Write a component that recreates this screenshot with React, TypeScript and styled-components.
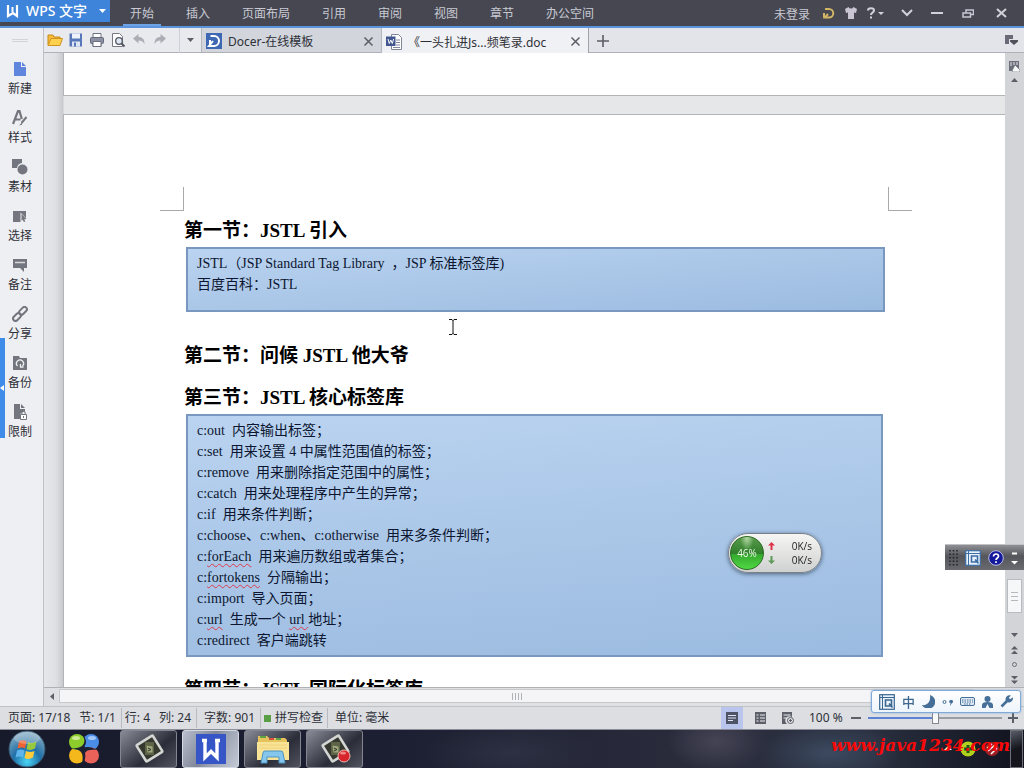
import React from "react";
import styled, { createGlobalStyle, css } from "styled-components";

const GlobalStyle = createGlobalStyle`
  * { box-sizing: border-box; }
  body {
    margin: 0;
    font-family: "Noto Sans", "Noto Sans CJK SC", sans-serif;
    font-size: 12px;
    line-height: 16px;
    color: #2e3038;
  }
  button {
    font: inherit;
    color: inherit;
    background: none;
    border: 0;
    padding: 0;
    margin: 0;
  }
  svg { display: block; flex: none; }
`;

/* ---------- frame ---------- */

const Shell = styled.div`
  display: flex;
  flex-direction: column;
  height: 100vh;
  overflow: hidden;
  background: #e5e6e9;
`;

const TitleBar = styled.header`
  display: flex;
  flex: none;
  height: 28px;
  background: #464751;
  border-bottom: 2px solid #5b93dc;
  color: #c9cad3;
`;

const AppButton = styled.button`
  display: flex;
  align-items: center;
  width: 110px;
  height: 22px;
  padding: 0 4px 0 6px;
  background: #3d84da;
  color: #fff;
  font-size: 14px;
  font-weight: 500;
  svg:last-child { margin-left: auto; }
`;

const Menu = styled.nav`
  display: flex;
  gap: 18px;
  padding-left: 13px;
`;

const MenuItem = styled.button<{ $active?: boolean }>`
  height: 26px;
  padding: 4px 7px 0;
  border-bottom: 2px solid ${(p) => (p.$active ? "#6ea3e6" : "transparent")};
`;

const WindowTools = styled.div`
  display: flex;
  align-items: center;
  margin-left: auto;
  padding-right: 10px;
`;

const LoginButton = styled.button`
  margin-right: 8px;
  padding-top: 3px;
`;

const ToolButton = styled.button<{ $w: number }>`
  display: flex;
  align-items: center;
  justify-content: center;
  width: ${(p) => p.$w}px;
  height: 26px;
`;

const Body = styled.div`
  display: flex;
  flex: 1;
  min-height: 0;
`;

/* ---------- sidebar ---------- */

const Sidebar = styled.aside`
  position: relative;
  display: flex;
  flex-direction: column;
  flex: none;
  width: 44px;
  padding: 11px 3px 0 0;
  background: #eeeff2;
  border-right: 1px solid #bfc1c6;
`;

const Grip = styled.div`
  flex: none;
  width: 16px;
  height: 3px;
  margin: 0 0 19px 12px;
  border: solid #d2d4d9;
  border-width: 1px 0;
`;

const SideItem = styled.button`
  display: flex;
  flex: none;
  flex-direction: column;
  align-items: center;
  gap: 4px;
  height: 49px;
`;

const Drawer = styled.button`
  position: absolute;
  left: 0;
  top: 310px;
  display: flex;
  align-items: center;
  width: 5px;
  height: 100px;
  background: #3f8bea;
`;

/* ---------- document tabs ---------- */

const Main = styled.div`
  display: flex;
  flex: 1;
  flex-direction: column;
  min-width: 0;
`;

const TabRow = styled.div`
  display: flex;
  flex: none;
  height: 25px;
  background: #e2e4e9;
  border-bottom: 1px solid #aeb1b8;
`;

const QuickTools = styled.div`
  display: flex;
  align-items: center;
  width: 157px;
  padding-left: 1px;
  background: #e8eaed;
`;

const Divider = styled.span`
  width: 1px;
  height: 25px;
  margin-left: 9px;
  background: #cdd0d6;
`;

const Tab = styled.div<{ $active?: boolean }>`
  display: flex;
  align-items: center;
  gap: 6px;
  width: ${(p) => (p.$active ? 208 : 180)}px;
  height: ${(p) => (p.$active ? 25 : 24)}px;
  padding: 2px 7px 0 4px;
  background: ${(p) => (p.$active ? "#f0f1f4" : "#d2d5dc")};
  border-left: 1px solid #b4b7be;
  ${(p) => p.$active && css`border-right: 1px solid #9fa2a9;`}
  button { margin-left: auto; }
`;

const TabTitle = styled.span`
  padding-top: 2px;
`;

const NewTab = styled.button`
  padding: 2px 8px 0;
`;

const TabList = styled.button`
  margin-left: auto;
  padding-right: 6px;
`;

/* ---------- document ---------- */

const Workspace = styled.div`
  display: flex;
  flex: 1;
  min-height: 0;
`;

const Canvas = styled.main`
  flex: 1;
  min-width: 0;
  padding-left: 19px;
  overflow: hidden;
  background: linear-gradient(90deg, #e6e7ea 0, #dfe0e3 12px, #c9cacd 19px, #e6e7e9 20px);
`;

const Page = styled.article`
  position: relative;
  padding: 0 117px 0 120px;
  background: #fff;
  border: solid #b3b4b7;
  border-width: 1px 0 1px 1px;
`;

const PageEnd = styled(Page)`
  height: 43px;
  border-top: 0;
  margin-bottom: 18px;
`;

const PageMargins = styled.div`
  display: flex;
  justify-content: space-between;
  margin: 0 -24px 4px;
  padding-top: 72px;
`;

const Corner = styled.span<{ $side: "left" | "right" }>`
  width: 24px;
  height: 24px;
  border-bottom: 1px solid #a9a9a9;
  ${(p) => (p.$side === "left" ? "border-right" : "border-left")}: 1px solid #a9a9a9;
`;

const Heading = styled.h2<{ $gap?: number }>`
  margin: ${(p) => p.$gap ?? 0}px 0 0;
  font-family: "Liberation Serif", "Noto Sans CJK SC", serif;
  font-size: 19px;
  font-weight: 700;
  line-height: 32px;
  color: #000;
  white-space: nowrap;
`;

const CodeBox = styled.section<{ $h: number; $inset: number }>`
  min-height: ${(p) => p.$h}px;
  margin: 0 ${(p) => p.$inset}px 0 2px;
  padding: 4px 9px 0;
  border: 2px solid #7898bf;
  background: linear-gradient(175deg, #bad3f0, #9bbbe0);
  color: #0c1630;
  font-family: "Liberation Serif", "Noto Sans CJK SC", serif;
  font-size: 14px;
  line-height: 21px;
  p { margin: 0; white-space: pre; }
`;

const Misspelt = styled.span`
  text-decoration: underline wavy #dc3a4c 1px;
  text-underline-offset: 2px;
  text-decoration-skip-ink: none;
`;

const Caret = styled.svg`
  position: absolute;
  left: 385px;
  top: 204px;
`;

/* ---------- scroll bars ---------- */

const VScroll = styled.div`
  display: flex;
  flex: none;
  flex-direction: column;
  align-items: center;
  gap: 0;
  width: 19px;
  padding-top: 8px;
  background: #d3d4d7;
`;

const VTrack = styled.div`
  display: flex;
  flex: 1;
  flex-direction: column;
  justify-content: flex-end;
  padding-bottom: 14px;
`;

const VThumb = styled.div`
  display: flex;
  flex-direction: column;
  align-items: center;
  justify-content: center;
  gap: 3px;
  width: 15px;
  height: 34px;
  background: #f6f7f9;
  border: 1px solid #b9bbc1;
  i { width: 7px; height: 1px; background: #b6b8bd; }
`;

const ScrollButton = styled.button`
  display: flex;
  align-items: center;
  justify-content: center;
  width: 15px;
  height: 15px;
`;

const HScroll = styled.div`
  display: flex;
  flex: none;
  align-items: center;
  height: 19px;
  padding: 1px 50px 3px 0;
  background: #dfe0e3;
  border-top: 1px solid #b0b1b5;
`;

const HThumb = styled.div`
  display: flex;
  flex: 1;
  align-items: center;
  justify-content: center;
  gap: 2px;
  height: 14px;
  background: #f5f5f7;
  border: 1px solid #c8c9cd;
  i { width: 1px; height: 7px; background: #b0b2b8; }
`;

/* ---------- status bar ---------- */

const StatusBar = styled.footer`
  display: flex;
  flex: none;
  align-items: center;
  height: 23px;
  padding-left: 1px;
  background: #dcdee2;
  border-top: 1px solid #c0c2c6;
`;

const StatusCell = styled.div`
  display: flex;
  align-items: center;
  gap: 9px;
  height: 20px;
  padding: 0 5px 0 7px;
  & + & { border-left: 1px solid #b9bbc0; }
`;

const TightCell = styled(StatusCell)`
  gap: 4px;
  padding: 0 4px 0 3px;
`;

const PositionCell = styled(StatusCell)`
  padding-left: 3px;
`;

const Square = styled.span`
  width: 7px;
  height: 7px;
  background: #5a9e45;
`;

const StatusRight = styled.div`
  display: flex;
  align-items: center;
  margin-left: auto;
  padding-right: 6px;
`;

const ViewButton = styled.button<{ $on?: boolean }>`
  display: flex;
  align-items: center;
  justify-content: center;
  width: 22px;
  height: 22px;
  margin-right: 6px;
  background: ${(p) => (p.$on ? "#b9c5ec" : "transparent")};
`;

const ZoomLabel = styled.span`
  width: 42px;
  margin-left: 4px;
`;

const Zoom = styled.input`
  appearance: none;
  width: 134px;
  height: 14px;
  margin: 0 6px 0 7px;
  background: linear-gradient(90deg, #5c83d6 50%, #9a9da4 50%) center / 100% 2px no-repeat;
  &::-webkit-slider-thumb {
    appearance: none;
    width: 7px;
    height: 12px;
    background: #fafafa;
    border: 1px solid #85878e;
  }
`;

/* ---------- task bar ---------- */

const TaskBar = styled.nav`
  position: relative;
  display: flex;
  flex: none;
  align-items: center;
  gap: 5px;
  height: 39px;
  border-top: 1px solid #8b8e98;
  background:
    radial-gradient(ellipse 70px 30px at 81% 60%, #3c4a60, transparent),
    radial-gradient(ellipse 50px 30px at 70% 30%, #454455, transparent),
    radial-gradient(ellipse 90px 30px at 50% 60%, #2c3042, transparent),
    linear-gradient(90deg, #171a2b, #1d2032 40%, #2a2c3c 68%, #2a3040 85%, #11131e);
`;

const StartButton = styled.button`
  margin-left: 8px;
`;

const Launcher = styled.button`
  margin: 0 15px 0 17px;
`;

const TaskButton = styled.button<{ $on?: boolean }>`
  display: flex;
  align-items: center;
  justify-content: center;
  width: 57px;
  height: 38px;
  border: 1px solid ${(p) => (p.$on ? "#d5d9e4" : "#83868f")};
  border-radius: 3px;
  background: ${(p) =>
    p.$on
      ? "linear-gradient(120deg, #b9bfce, #7f8697 45%, #9aa1b1 60%, #c4c9d5)"
      : "linear-gradient(140deg, #898c96, #4a4d58 40%, #2b2d38 60%, #50535d)"};
`;

const Tray = styled.div`
  display: flex;
  align-items: center;
  gap: 7px;
  height: 100%;
  margin-left: auto;
  padding-right: 1px;
`;

const ShowDesktop = styled.button`
  width: 13px;
  height: 38px;
  margin-left: 3px;
  border: 1px solid #6d7078;
  background: linear-gradient(160deg, #5a5d66, #14151d 50%);
`;

const SiteLink = styled.a`
  position: absolute;
  right: 14px;
  top: 5px;
  color: #fb0808;
  font: italic 700 17px/20px "DejaVu Serif", serif;
  text-decoration: none;
`;

/* ---------- floating widgets ---------- */

const SpeedBall = styled.aside`
  position: fixed;
  right: 202px;
  bottom: 195px;
  display: flex;
  align-items: center;
  width: 94px;
  height: 40px;
  padding: 0 9px 0 1px;
  border: 1px solid #7b8087;
  border-radius: 20px;
  background: linear-gradient(#f6f6f4, #cfd1d0);
  box-shadow: 0 1px 4px #4b5f7a;
  color: #222;
  font-family: "Open Sans", sans-serif;
  font-size: 10px;
  line-height: 14px;
`;

const Percent = styled.strong`
  display: flex;
  align-items: center;
  justify-content: center;
  width: 34px;
  height: 34px;
  margin-right: 4px;
  border: 1px solid #2b6b22;
  border-radius: 50%;
  background: radial-gradient(ellipse at 50% 0, #b8dba9 0, transparent 30%), linear-gradient(#5a9a4c, #2f7f2b 52%, #35a82f 54%, #4fd843);
  color: #eefbe8;
  font-weight: 400;
`;

const Rates = styled.div`
  flex: 1;
  p {
    display: flex;
    align-items: center;
    justify-content: space-between;
    margin: 0;
  }
`;

const LanguageBar = styled.aside`
  position: fixed;
  right: 0;
  bottom: 198px;
  display: flex;
  align-items: center;
  gap: 7px;
  width: 79px;
  height: 26px;
  padding: 0 3px 0 4px;
  border-top: 1px solid #c2c2c4;
  background: linear-gradient(#8f9095, #55565c 45%, #6a6b70);
`;

const ImeBar = styled.aside`
  position: fixed;
  right: 3px;
  bottom: 55px;
  display: flex;
  align-items: center;
  justify-content: space-between;
  width: 150px;
  height: 23px;
  padding: 0 7px;
  border: 1px solid #7fa9d6;
  border-radius: 3px;
  background: linear-gradient(#fff, #edf4fb);
  box-shadow: 0 0 2px #7fa9d6;
  color: #3f678f;
  font-weight: 500;
  font-size: 13px;
`;

/* ---------- icons ---------- */

type IconProps = { w?: number; h?: number; children: React.ReactNode };
const Icon = ({ w = 16, h = 16, children }: IconProps) => (
  <svg width={w} height={h} viewBox={`0 0 ${w} ${h}`} aria-hidden="true">
    {children}
  </svg>
);

const Down = ({ fill = "#5c5f68" }) => (
  <Icon w={7} h={4}><path d="M0 0h7L3.500 4z" fill={fill} /></Icon>
);
const Up = () => (
  <Icon w={7} h={4}><path d="M0 4h7L3.500 0z" fill="#5c5f68" /></Icon>
);
const Close = ({ color = "#5b5d66" }) => (
  <Icon w={11} h={11}><path d="M1.500 1.500l8 8m0-8l-8 8" stroke={color} strokeWidth="1.500" /></Icon>
);
const Quick = ({ color }: { color: string }) => (
  <Icon>
    <rect x=".7" y=".7" width="14.600" height="14.600" fill="#eaf3fb" stroke={color} strokeWidth="1.200" />
    <path d="M3.500 1v14M1 3.500h14" stroke={color} />
    <path d="M6.500 6h6v6h-6zM10 9.500l3.500 4" fill="none" stroke={color} strokeWidth="1.600" />
  </Icon>
);

const g = "#73767e";
const sideItems: [string, React.ReactNode][] = [
  ["新建", <path d="M2 1h7v5h5v9H2zM10 1l4 4h-4z" fill="#5f86dc" />],
  ["样式", <>
    <path d="M1 14L6 1h1.500l2.300 8M3.500 9.500h5" fill="none" stroke={g} strokeWidth="2.200" />
    <path d="M14.500 7l-5 6" stroke={g} strokeWidth="2" /><path d="M10 12.500l-3 3 3-.7z" fill={g} />
  </>],
  ["素材", <><path d="M0 0h10v4a6 6 0 0 0-5 5H0z" fill={g} /><circle cx="10.500" cy="10.500" r="5" fill={g} /></>],
  ["选择", <><path d="M1 3h13v7L8.500 4.500V14H1z" fill={g} /><path d="M9.500 6l5 5-2.200.2 1 2.300-1.500.5-1-2.300-1.300 1z" fill={g} /></>],
  ["备注", <><path d="M1 2h14v9h-3v4l-4-4H1z" fill={g} /><path d="M3 5.500h10" stroke="#d8dade" strokeWidth="1.500" /></>],
  ["分享", <g fill="none" stroke={g} strokeWidth="2">
    <rect x="-4.500" y="-2.400" width="9" height="4.800" rx="2.400" transform="translate(11 4.800) rotate(-45)" />
    <rect x="-4.500" y="-2.400" width="9" height="4.800" rx="2.400" transform="translate(5 11) rotate(-45)" />
  </g>],
  ["备份", <>
    <path d="M1 1h6l1 2h7v12H1z" fill={g} />
    <path d="M5.500 11a3.500 3.500 0 1 1 5 0M8.500 9v3h3" fill="none" stroke="#eef0f2" strokeWidth="1.300" />
  </>],
  ["限制", <>
    <path d="M2 0h6v5h5v3a4 4 0 0 0-5 3v4H2zM9 0l4 4H9z" fill={g} />
    <path d="M8.500 10.500h6v5h-6z" fill="#fff" stroke={g} />
    <path d="M9.800 10.500V9a1.700 1.700 0 0 1 3.400 0v1.500" fill="none" stroke={g} />
    <path d="M11.500 12v2" stroke={g} />
  </>],
];

const quick: [string, React.ReactNode][] = [
  ["打开", <><path d="M1 13V3h5l1 2h6v3" fill="#f5bd3a" stroke="#c98a1c" /><path d="M1 13.500l3-7h11.500l-2.500 7z" fill="#fdd04d" stroke="#d1921f" /></>],
  ["保存", <><path d="M1.500 1.500h12.500v13H1.500z" fill="#5877b8" /><path d="M4 1.500h8v5H4z" fill="#eef2fa" /><path d="M4 9.500h8v5H4z" fill="#dfe6f4" /><path d="M6 10.500h2v4H6z" fill="#5877b8" /></>],
  ["打印", <><path d="M4 5V1.500h8V5M4 11v3.500h8V11" fill="#fff" stroke="#6c7080" /><rect x="1.500" y="5.500" width="13" height="6" rx="1" fill="#8b90a2" stroke="#656a7a" /><path d="M4 9.500h8v5H4z" fill="#fff" stroke="#6c7080" /></>],
  ["打印预览", <><path d="M2.500 1.500h7l3 3v10h-10z" fill="#fff" stroke="#777a82" /><circle cx="9" cy="9" r="3.300" fill="#dde8f2" stroke="#555863" strokeWidth="1.300" /><path d="M11.300 11.300l3.200 3.200" stroke="#555863" strokeWidth="2" /></>],
  ["撤销", <path d="M2 6.500L7.500 2v3c4 0 6 2.500 6 7-1.500-2.500-3-3.500-6-3.500v3z" fill="#aaadb4" />],
  ["恢复", <path d="M14 6.500L8.500 2v3c-4 0-6 2.500-6 7 1.500-2.500 3-3.500 6-3.500v3z" fill="#aaadb4" />],
];

const CamtasiaIcon = ({ recording = false }) => (
  <Icon w={32} h={30}>
    <rect x="7" y="5" width="19" height="19" rx="1" fill="#35382f" stroke="#d4d6d3" strokeWidth="2.600" transform="rotate(-32 16.500 14.500)" />
    <path d="M12 8h9v13h-9z" fill="#5c6347" />
    <path d="M13.500 11.500l6 1v6h-5z" fill="#a0a77f" />
    <path d="M15 14l3 1.500-3 1.500" fill="none" stroke="#2d3025" />
    {recording && <><circle cx="25" cy="22" r="6" fill="#d6262b" stroke="#f0b5b0" /><ellipse cx="24" cy="19" rx="3" ry="1.600" fill="#ee8682" /></>}
  </Icon>
);

const menu = ["开始", "插入", "页面布局", "引用", "审阅", "视图", "章节", "办公空间"];

export default function App() {
  return (
    <Shell>
      <GlobalStyle />
      <TitleBar>
        <AppButton>
          <Icon w={20} h={14}>
            <path d="M2 1v11l5-3 4 3V1" fill="none" stroke="#fff" strokeWidth="2.200" />
            <path d="M6.500 3v5" stroke="#fff" strokeWidth="2" />
          </Icon>
          WPS 文字
          <Down fill="#fff" />
        </AppButton>
        <Menu>
          {menu.map((m, i) => <MenuItem key={m} $active={i === 0}>{m}</MenuItem>)}
        </Menu>
        <WindowTools>
          <LoginButton>未登录</LoginButton>
          <ToolButton $w={22} aria-label="Docer">
            <Icon w={12} h={12}><path d="M2 2h4a4 4 0 0 1 0 8.500H2l3-3.500M1 6v4.500" fill="none" stroke="#d2b565" strokeWidth="2" /></Icon>
          </ToolButton>
          <ToolButton $w={22} aria-label="皮肤">
            <Icon w={12} h={12}><path d="M0 2l3.500-2a2.800 2.800 0 0 0 5 0L12 2l-1 4-2-.5V12H3V5.500L1 6z" fill="#c9c5d2" /></Icon>
          </ToolButton>
          <ToolButton $w={26} aria-label="帮助">
            <Icon w={18} h={12}>
              <path d="M2 3.500C2 .5 8 .5 8 3.500 8 5.500 5 5.500 5 8M5 9.500v2" fill="none" stroke="#d3d1da" strokeWidth="2" />
              <path d="M12 5h6l-3 3z" fill="#d3d1da" />
            </Icon>
          </ToolButton>
          <ToolButton $w={38} aria-label="收起功能区">
            <Icon w={12} h={8}><path d="M1 1l5 5 5-5" fill="none" stroke="#d3d1da" strokeWidth="2" /></Icon>
          </ToolButton>
          <ToolButton $w={22} aria-label="最小化">
            <Icon w={12} h={4}><path d="M0 2h12" stroke="#d3d1da" strokeWidth="2" /></Icon>
          </ToolButton>
          <ToolButton $w={40} aria-label="还原">
            <Icon w={12} h={9}><path d="M4 3.500V1h7.500v4.500H9M1 4h7.500v4H1z" fill="none" stroke="#c9c5d2" strokeWidth="1.500" /></Icon>
          </ToolButton>
          <ToolButton $w={26} aria-label="关闭">
            <Icon w={11} h={10}><path d="M1 1l9 8M10 1L1 9" stroke="#d3d1da" strokeWidth="2" /></Icon>
          </ToolButton>
        </WindowTools>
      </TitleBar>

      <Body>
        <Sidebar>
          <Grip />
          {sideItems.map(([label, art]) => (
            <SideItem key={label}><Icon>{art}</Icon>{label}</SideItem>
          ))}
          <Drawer aria-label="展开侧栏"><Icon w={4} h={6}><path d="M4 0v6L0 3z" fill="#fff" /></Icon></Drawer>
        </Sidebar>

        <Main>
          <TabRow>
            <QuickTools>
              {quick.map(([label, art]) => (
                <ToolButton key={label} $w={21} aria-label={label}><Icon>{art}</Icon></ToolButton>
              ))}
              <Divider />
              <ToolButton $w={21} aria-label="更多"><Down /></ToolButton>
            </QuickTools>
            <Tab>
              <Icon w={16} h={16}>
                <path d="M0 0h16v16H0z" fill="#3f68b4" />
                <path d="M4.500 3H8a5 5 0 0 1 0 10H3l4-5M4 7v5" fill="none" stroke="#fff" strokeWidth="2" />
              </Icon>
              <TabTitle>Docer-在线模板</TabTitle>
              <button aria-label="关闭 Docer"><Close /></button>
            </Tab>
            <Tab $active>
              <Icon w={16} h={16}>
                <path d="M5.500.5h7l3 3v12h-10z" fill="#fff" stroke="#80869a" />
                <path d="M10 6h4M10 8.500h4M10 11h4M7 13.500h7" stroke="#80869a" />
                <path d="M0 2.500h9.500V12H0z" fill="#42578f" />
                <path d="M2 5l1.300 4.500L4.800 6l1.500 3.500L7.600 5" fill="none" stroke="#fff" />
              </Icon>
              <TabTitle>《一头扎进Js...频笔录.doc</TabTitle>
              <button aria-label="关闭文档"><Close /></button>
            </Tab>
            <NewTab aria-label="新建标签">
              <Icon w={12} h={12}><path d="M6 0v12M0 6h12" stroke="#5b5d66" strokeWidth="1.600" /></Icon>
            </NewTab>
            <TabList aria-label="标签列表">
              <Icon w={13} h={11}><path d="M0 0h8v4H4v5H0z" fill="#686b76" /><path d="M5 5h8v1.500L9 10 5 6.500z" fill="#4e515b" /></Icon>
            </TabList>
          </TabRow>

          <Workspace>
            <Canvas>
              <PageEnd />
              <Page>
                <PageMargins><Corner $side="left" /><Corner $side="right" /></PageMargins>
                <Heading>第一节：JSTL 引入</Heading>
                <CodeBox $h={65} $inset={3}>
                  <p>JSTL（JSP Standard Tag Library  ，JSP 标准标签库)</p>
                  <p>百度百科：JSTL</p>
                </CodeBox>
                <Heading $gap={28}>第二节：问候 JSTL 他大爷</Heading>
                <Heading $gap={10}>第三节：JSTL 核心标签库</Heading>
                <CodeBox $h={243} $inset={5}>
                  <p>c:out  内容输出标签；</p>
                  <p>c:set  用来设置 4 中属性范围值的标签；</p>
                  <p>c:remove  用来删除指定范围中的属性；</p>
                  <p>c:catch  用来处理程序中产生的异常；</p>
                  <p>c:if  用来条件判断；</p>
                  <p>c:choose、c:when、c:otherwise  用来多条件判断；</p>
                  <p>c:<Misspelt>forEach</Misspelt>  用来遍历数组或者集合；</p>
                  <p>c:<Misspelt>fortokens</Misspelt>  分隔输出；</p>
                  <p>c:import  导入页面；</p>
                  <p>c:<Misspelt>url</Misspelt>  生成一个 <Misspelt>url </Misspelt>地址；</p>
                  <p>c:redirect  客户端跳转</p>
                </CodeBox>
                <Heading $gap={17}>第四节：JSTL 国际化标签库</Heading>
                <Caret width="8" height="16" viewBox="0 0 8 16" aria-hidden="true">
                  <path d="M0 .5h3L4 1.500 5 .5h3M4 1v14M0 15.500h3l1-1 1 1h3" fill="none" stroke="#111" />
                </Caret>
              </Page>
            </Canvas>
            <VScroll>
              <Icon w={11} h={11}>
                <path d="M0 0h10v10H0z" fill="#6b6e78" /><path d="M2 1v4M5 1v3M8 1v3" stroke="#e6e7ea" /><path d="M3 10l3-6 5 5v2H4z" fill="#f6f7f8" stroke="#6b6e78" strokeWidth=".6" />
              </Icon>
              <ScrollButton aria-label="向上滚动"><Up /></ScrollButton>
              <VTrack><VThumb><i /><i /><i /></VThumb></VTrack>
              <ScrollButton aria-label="向下滚动"><Down /></ScrollButton>
              <ScrollButton aria-label="上一页"><Icon w={7} h={8}><path d="M0 3.500h7L3.500 0zM0 8h7L3.500 4.500z" fill="#5c5f68" /></Icon></ScrollButton>
              <ScrollButton aria-label="选择浏览对象"><Icon w={7} h={7}><circle cx="3.500" cy="3.500" r="2" fill="none" stroke="#6b6e78" /></Icon></ScrollButton>
              <ScrollButton aria-label="下一页"><Icon w={7} h={8}><path d="M0 0h7L3.500 3.500zM0 4.500h7L3.500 8z" fill="#5c5f68" /></Icon></ScrollButton>
            </VScroll>
          </Workspace>

          <HScroll>
            <ScrollButton aria-label="向左滚动"><Icon w={4} h={7}><path d="M4 0v7L0 3.500z" fill="#5c5f68" /></Icon></ScrollButton>
            <HThumb><i /><i /><i /><i /></HThumb>
          </HScroll>
        </Main>
      </Body>

      <StatusBar>
        <StatusCell><span>页面: 17/18</span><span>节: 1/1</span></StatusCell>
        <PositionCell><span>行: 4</span><span>列: 24</span></PositionCell>
        <StatusCell>字数: 901</StatusCell>
        <TightCell><Square />拼写检查</TightCell>
        <StatusCell>单位: 毫米</StatusCell>
        <StatusRight>
          <ViewButton $on aria-label="页面视图"><Icon w={12} h={12}><path d="M0 0h12v12H0z" fill="#4e5566" /><path d="M2 3.500h8M2 6h8M2 8.500h5" stroke="#dfe4f4" /></Icon></ViewButton>
          <ViewButton aria-label="大纲视图"><Icon w={11} h={12}><path d="M0 0h11v12H0z" fill="#5d6069" /><path d="M1.500 3h2M5 3h5M1.500 6h2M5 6h5M1.500 9h2M5 9h5" stroke="#eceef1" /></Icon></ViewButton>
          <ViewButton aria-label="网页视图"><Icon w={12} h={12}><path d="M0 0h10v5a4 4 0 0 0-5 7H0z" fill="#5d6069" /><path d="M1.500 3h7M1.500 6h3" stroke="#eceef1" /><circle cx="8.500" cy="8.500" r="3" fill="#dcdee2" stroke="#5d6069" /><path d="M8.500 7v3M7 8.500h3" stroke="#5d6069" /></Icon></ViewButton>
          <ZoomLabel>100 %</ZoomLabel>
          <button aria-label="缩小"><Icon w={10} h={10}><path d="M0 5h10" stroke="#5c5f68" strokeWidth="2" /></Icon></button>
          <Zoom type="range" min={0} max={200} defaultValue={100} aria-label="显示比例" />
          <button aria-label="放大"><Icon w={10} h={10}><path d="M0 5h10M5 0v10" stroke="#5c5f68" strokeWidth="2" /></Icon></button>
        </StatusRight>
      </StatusBar>

      <TaskBar>
        <StartButton aria-label="开始菜单">
          <Icon w={38} h={38}>
            <defs>
              <radialGradient id="orb" cx=".5" cy=".85" r=".85">
                <stop offset="0" stopColor="#4ad4f4" /><stop offset=".45" stopColor="#1f6fa8" /><stop offset="1" stopColor="#8fb0c4" />
              </radialGradient>
            </defs>
            <circle cx="19" cy="19" r="18" fill="url(#orb)" stroke="#37536b" />
            <path d="M11 11.500q4-2.500 7.500 0l-1.500 7q-3.500-2-7.500 0z" fill="#ee6434" />
            <path d="M20 12q4 2 8.500-.5l-1.500 7q-4.500 2.500-8.500.5z" fill="#97c83d" />
            <path d="M9 20.500q4-2 7.500 0l-1.500 7q-3.500-2.200-7.500 0z" fill="#5fb4ec" />
            <path d="M18 21q4 2.200 8.500 0l-1.500 6.500q-4.500 2.500-8.500.5z" fill="#fccb3b" />
            <ellipse cx="19" cy="8" rx="13" ry="6" fill="#fff" opacity=".25" />
          </Icon>
        </StartButton>
        <Launcher aria-label="启动器">
          <Icon w={32} h={32}>
            <circle cx="23" cy="9" r="8" fill="#4a8ce6" />
            <circle cx="23" cy="22.500" r="8" fill="#e8625a" />
            <circle cx="9" cy="22.500" r="8" fill="#f5b81c" />
            <circle cx="9" cy="9" r="8" fill="#8ccc2b" />
            <path d="M15 2c4 5 4 9 0 13 4-2 9-1 14 2-6-1-11 0-12 3 1 4 0 8-3 11 1-6 1-9-1-12-3-3-6-3-11-3 5-1 9-1 12-3 3-3 3-6 1-11z" fill="#1c2133" />
            <ellipse cx="8" cy="5" rx="4" ry="2" fill="#cdeb92" /><ellipse cx="24" cy="5" rx="4" ry="2" fill="#a3c8f8" />
          </Icon>
        </Launcher>
        <TaskButton aria-label="Camtasia"><CamtasiaIcon /></TaskButton>
        <TaskButton $on aria-label="WPS 文字">
          <Icon w={30} h={30}>
            <path d="M0 0h30v30H0z" fill="#3656c8" />
            <path d="M6 6.500h5M19 6.500h5M9 5v18.500l6-6 6 6V5" fill="none" stroke="#fff" strokeWidth="3.400" />
          </Icon>
        </TaskButton>
        <TaskButton aria-label="资源管理器">
          <Icon w={34} h={30}>
            <path d="M2 6V2h9l2 2h16l2 2v20H2z" fill="#e7c35d" />
            <path d="M4 3h6M20 5h5" stroke="#5ea447" strokeWidth="2" /><path d="M13 5h5" stroke="#d5503e" strokeWidth="2" />
            <path d="M1 8h32v18H1z" fill="#f9e396" /><path d="M3 11h28M3 14h28" stroke="#efd27a" />
            <path d="M5 29l2-10q0-2 2-2h16q2 0 2 2l2 10h-6v-6H11v6z" fill="#85c6ec" stroke="#4c94c4" />
          </Icon>
        </TaskButton>
        <TaskButton aria-label="录像机"><CamtasiaIcon recording /></TaskButton>
        <Tray>
          <Icon w={8} h={6}><path d="M4 0l4 4H0z" fill="#fff" /></Icon>
          <Icon w={18} h={16}><circle cx="9" cy="8" r="7.500" fill="#b3d21d" /><path d="M9 4v8M5 8h8" stroke="#1d5a1a" strokeWidth="3" /></Icon>
          <Icon w={16} h={16}><circle cx="8" cy="8" r="7" fill="#9d2026" /><path d="M3 7l5-4M4 10l7-6M7 13l6-6" stroke="#fff" strokeWidth="1.500" /></Icon>
          <ShowDesktop aria-label="显示桌面" />
        </Tray>
        <SiteLink href="#site">www.java1234.com</SiteLink>
      </TaskBar>

      <SpeedBall>
        <Percent>46%</Percent>
        <Rates>
          <p><Icon w={7} h={8}><path d="M3.500 0L7 3.500H4.500V8h-2V3.500H0z" fill="#dd3348" /></Icon>0K/s</p>
          <p><Icon w={7} h={8}><path d="M3.500 8L7 4.500H4.500V0h-2v4.500H0z" fill="#5c9a56" /></Icon>0K/s</p>
        </Rates>
      </SpeedBall>

      <LanguageBar>
        <Icon w={9} h={18}><path d="M1 1v17M4.500 1v17M8 1v17" stroke="#222327" strokeWidth="1.500" strokeDasharray="1.500 2" /></Icon>
        <Quick color="#3c6ea5" />
        <Icon>
          <circle cx="8" cy="8" r="7.300" fill="#14189a" stroke="#b9bce6" />
          <path d="M5.500 6.500c0-3.500 5-3 5-.3C10.500 8 8 8 8 10M8 11.300v1.700" fill="none" stroke="#fff" strokeWidth="1.700" />
        </Icon>
        <Icon w={7} h={16}><path d="M1 3.500h5" stroke="#fff" strokeWidth="2" /><path d="M0 11h7l-3.500 3.500z" fill="#fff" /></Icon>
      </LanguageBar>

      <ImeBar>
        <Quick color="#3a668f" />
        中
        <Icon w={13} h={13}><path d="M8 0a7 7 0 1 1-8 10C5 11 9 7 8 0z" fill="#456f99" /></Icon>
        <Icon w={11} h={10}><circle cx="2.500" cy="5" r="1.500" fill="none" stroke="#456f99" /><path d="M9 3a1.500 1.500 0 0 1 1 3L8 9l.5-3A1.500 1.500 0 0 1 9 3z" fill="#456f99" /></Icon>
        <Icon w={15} h={11}><rect x=".5" y="1.500" width="14" height="8" rx="1.500" fill="#dfeaf5" stroke="#456f99" /><path d="M2 4h11M2 6h11M4 8h7" stroke="#456f99" strokeDasharray="1.500 1" /></Icon>
        <Icon w={11} h={12}><circle cx="5.500" cy="3" r="3" fill="#456f99" /><path d="M0 12V9q0-3 5.500-3T11 9v3H7.500L5.500 8l-2 4z" fill="#456f99" /></Icon>
        <Icon w={13} h={13}><path d="M1.500 11.500l6-6" stroke="#456f99" strokeWidth="2.600" /><path d="M6 6a4 4 0 0 1 5-5.500L8.800 2.800l1.400 1.500 2.500-2A4 4 0 0 1 7 7z" fill="#456f99" /></Icon>
      </ImeBar>
    </Shell>
  );
}
